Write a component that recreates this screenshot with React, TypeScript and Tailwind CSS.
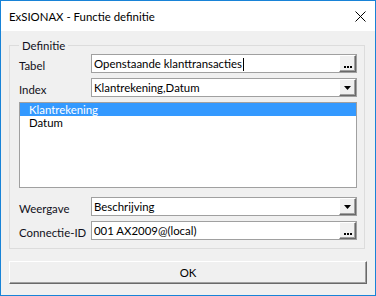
import React from "react";

const font = { fontFamily: "Lato, 'Noto Sans', sans-serif" };

const DotsButton = () => (
  <div className="flex items-end justify-center gap-[1px] w-[17px] h-[17px] pb-[3px] bg-[#f0f0f0] border border-t-white border-l-white border-b-[#696969] border-r-[#696969] shadow-[inset_-1px_-1px_0_#a0a0a0]">
    <span className="w-[2px] h-[2px] bg-black" />
    <span className="w-[2px] h-[2px] bg-black" />
    <span className="w-[2px] h-[2px] bg-black" />
  </div>
);

const ArrowButton = () => (
  <div className="flex items-center justify-center w-[17px] h-[17px] bg-[#f0f0f0] border border-t-white border-l-white border-b-[#696969] border-r-[#696969] shadow-[inset_-1px_-1px_0_#a0a0a0]">
    <svg width="7" height="4" viewBox="0 0 7 4">
      <path d="M0 0h7L3.5 4z" fill="#000" />
    </svg>
  </div>
);

const Field = ({
  label,
  value,
  kind,
  caret,
  className = "",
}: {
  label: string;
  value: string;
  kind: "dots" | "arrow";
  caret?: boolean;
  className?: string;
}) => (
  <div className={`flex items-center h-[19px] ${className}`}>
    <span className="w-[72px] pt-[4px] text-[#101020]">{label}</span>
    <div className="flex items-center w-[266px] h-[19px] bg-white border border-[#a0a0a0]">
      <span className="flex-1 pl-[2px] text-black whitespace-nowrap">
        {value}
        {caret && <span className="inline-block w-[1px] h-[13px] bg-black align-middle ml-[1px]" />}
      </span>
      {kind === "dots" ? <DotsButton /> : <ArrowButton />}
    </div>
  </div>
);

export default function App() {
  return (
    <div
      className="w-[376px] h-[296px] flex flex-col border border-[#1883d7] bg-[#f0f0f0] text-[11.4px] leading-[15px]"
      style={font}
    >
      <div className="flex items-center justify-between h-[30px] bg-white pl-[8px] pr-[9px]">
        <span className="text-black">ExSIONAX - Functie definitie</span>
        <svg width="11" height="11" viewBox="0 0 11 11">
          <path d="M0.5 0.5l10 10M10.5 0.5l-10 10" stroke="#000" strokeWidth="1" />
        </svg>
      </div>

      <div className="flex flex-col flex-1 pl-[8px]">
        <fieldset className="mt-[7px] w-[356px] border border-[#dcdcdc] pt-[1px] pb-[8px] pl-[9px] pr-[7px]">
          <legend className="ml-[0px] px-[3px] text-[#101020]">Definitie</legend>
          <Field label="Tabel" value="Openstaande klanttransacties" kind="dots" caret />
          <Field label="Index" value="Klantrekening,Datum" kind="arrow" className="mt-[5px]" />
          <div className="mt-[5px] w-[338px] h-[86px] bg-white border border-[#a0a0a0] flex flex-col">
            <div className="h-[13px] leading-[13px] bg-[#3399ff] text-white pl-[9px]">Klantrekening</div>
            <div className="h-[14px] leading-[14px] text-black pl-[9px]">Datum</div>
          </div>
          <Field label="Weergave" value="Beschrijving" kind="arrow" className="mt-[9px]" />
          <Field label="Connectie-ID" value="001 AX2009@(local)" kind="dots" className="mt-[5px]" />
        </fieldset>

        <button className="mt-[12px] w-[358px] h-[23px] flex items-center justify-center bg-[#f0f0f0] border border-t-white border-l-white border-b-[#696969] border-r-[#696969] shadow-[inset_-1px_-1px_0_#a0a0a0] text-black">
          OK
        </button>
      </div>
    </div>
  );
}
